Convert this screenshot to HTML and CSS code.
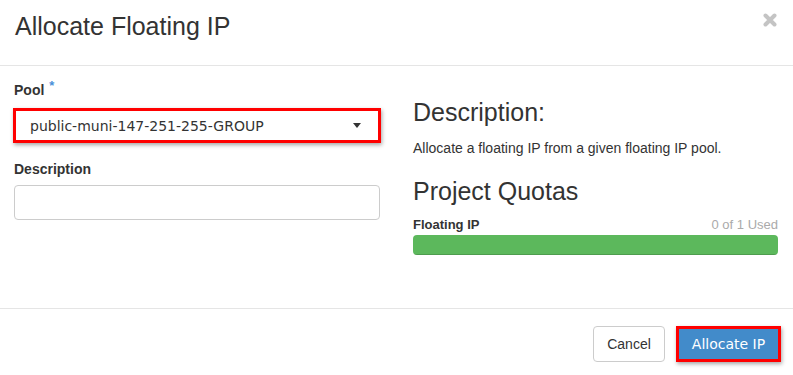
FILE: index.html
```html
<!DOCTYPE html>
<html>
<head>
<meta charset="utf-8">
<link rel="stylesheet" href="styles.css">
</head>
<body>
<div class="modal">
  <div class="modal-header">
    <h2 class="modal-title">Allocate Floating IP</h2>
    <button class="close" aria-label="Close">
      <svg width="14" height="14" viewBox="0 0 14 14"><path d="M2.5 2.5 L11.5 11.5 M11.5 2.5 L2.5 11.5" stroke="#c4c4c4" stroke-width="4" stroke-linecap="round"/></svg>
    </button>
  </div>
  <div class="modal-body">
    <div class="col">
      <label class="label">Pool <span class="req">*</span></label>
      <div class="select highlighted">
        <span>public-muni-147-251-255-GROUP</span>
        <span class="caret"></span>
      </div>
      <label class="label label-desc">Description</label>
      <div class="input"></div>
    </div>
    <div class="col col-right">
      <h3 class="heading">Description:</h3>
      <p class="help">Allocate a floating IP from a given floating IP pool.</p>
      <h3 class="heading heading-quota">Project Quotas</h3>
      <div class="quota-row">
        <strong class="quota-name">Floating IP</strong>
        <span class="quota-used">0 of 1 Used</span>
      </div>
      <div class="progress"><div class="bar"></div></div>
    </div>
  </div>
  <div class="modal-footer">
    <button class="btn btn-default">Cancel</button>
    <button class="btn btn-primary highlighted">Allocate IP</button>
  </div>
</div>
</body>
</html>
```
FILE: styles.css
```css
* { box-sizing: border-box; }
html, body { margin: 0; padding: 0; background: #fff; }
body {
  font-family: "Liberation Sans", Arial, sans-serif;
  color: #333;
  font-size: 13px;
  width: 793px;
  height: 375px;
  overflow: hidden;
}
.modal { width: 793px; }
.modal-header {
  height: 66px;
  border-bottom: 1px solid #e5e5e5;
  display: flex;
  justify-content: space-between;
  align-items: flex-start;
  padding: 0 16px 0 15px;
}
.modal-title {
  margin: 0;
  padding-top: 11px;
  font-size: 25px;
  font-weight: normal;
  line-height: 30px;
  color: #333;
}
.close {
  border: 0;
  background: none;
  padding: 0;
  margin-top: 13px;
  width: 14px;
  height: 14px;
}
.close svg { display: block; }
.modal-body {
  display: grid;
  grid-template-columns: 368px 365px;
  column-gap: 32px;
  padding: 10px 15px 0 13px;
  height: 243px;
  border-bottom: 1px solid #e5e5e5;
}
.col { display: flex; flex-direction: column; }
.label {
  font-weight: bold;
  font-size: 14px;
  line-height: 20px;
  margin-left: 1px;
  margin-bottom: 8px;
  color: #333;
}
.req {
  color: #4a90d9;
  font-size: 13px;
  vertical-align: 5px;
  margin-left: 1px;
}
.label-desc { margin-top: 16px; margin-bottom: 6px; }
.select {
  height: 35px;
  display: flex;
  align-items: center;
  justify-content: space-between;
  padding: 0 17px 0 14px;
  font-family: "DejaVu Sans", sans-serif;
  font-size: 14px;
  color: #333;
}
.highlighted {
  border: 3px solid #f00;
  box-shadow: 1px 2px 4px rgba(0,0,0,0.35);
}
.caret {
  width: 0; height: 0;
  border-left: 4.5px solid transparent;
  border-right: 4.5px solid transparent;
  border-top: 5px solid #333;
}
.input {
  margin-left: 1px;
  width: 366px;
  height: 35px;
  border: 1px solid #ccc;
  border-radius: 4px;
}
.heading {
  margin: 0;
  font-size: 25px;
  font-weight: normal;
  line-height: 30px;
  color: #333;
}
.col-right .heading:first-child { margin-top: 21px; }
.help {
  margin: 11px 0 0;
  font-size: 14px;
  line-height: 20px;
  color: #333;
}
.heading-quota { margin-top: 18px; }
.quota-row {
  display: flex;
  justify-content: space-between;
  align-items: baseline;
  margin-top: 10px;
  font-size: 13px;
  line-height: 18px;
}
.quota-name { font-weight: bold; color: #333; }
.quota-used { color: #aaa; }
.progress {
  margin-top: 1px;
  height: 20px;
  border-radius: 4px;
  background: #f5f5f5;
  overflow: hidden;
}
.bar {
  width: 100%;
  height: 100%;
  background: #5cb85c;
  box-shadow: inset 0 -1px 0 rgba(0,0,0,0.15);
}
.modal-footer {
  display: flex;
  justify-content: flex-end;
  align-items: center;
  gap: 11px;
  padding: 16px 12px 0 0;
}
.btn {
  height: 36px;
  border-radius: 4px;
  font-size: 14px;
  padding: 0 12px;
  cursor: pointer;
}
.btn-default {
  width: 72px;
  background: #fff;
  border: 1px solid #ccc;
  color: #333;
  font-family: "Liberation Sans", Arial, sans-serif;
}
.btn-primary {
  width: 105px;
  background: #428bca;
  color: #fff;
  border-radius: 0;
  font-family: "DejaVu Sans", sans-serif;
  margin-top: 1px;
}
```
